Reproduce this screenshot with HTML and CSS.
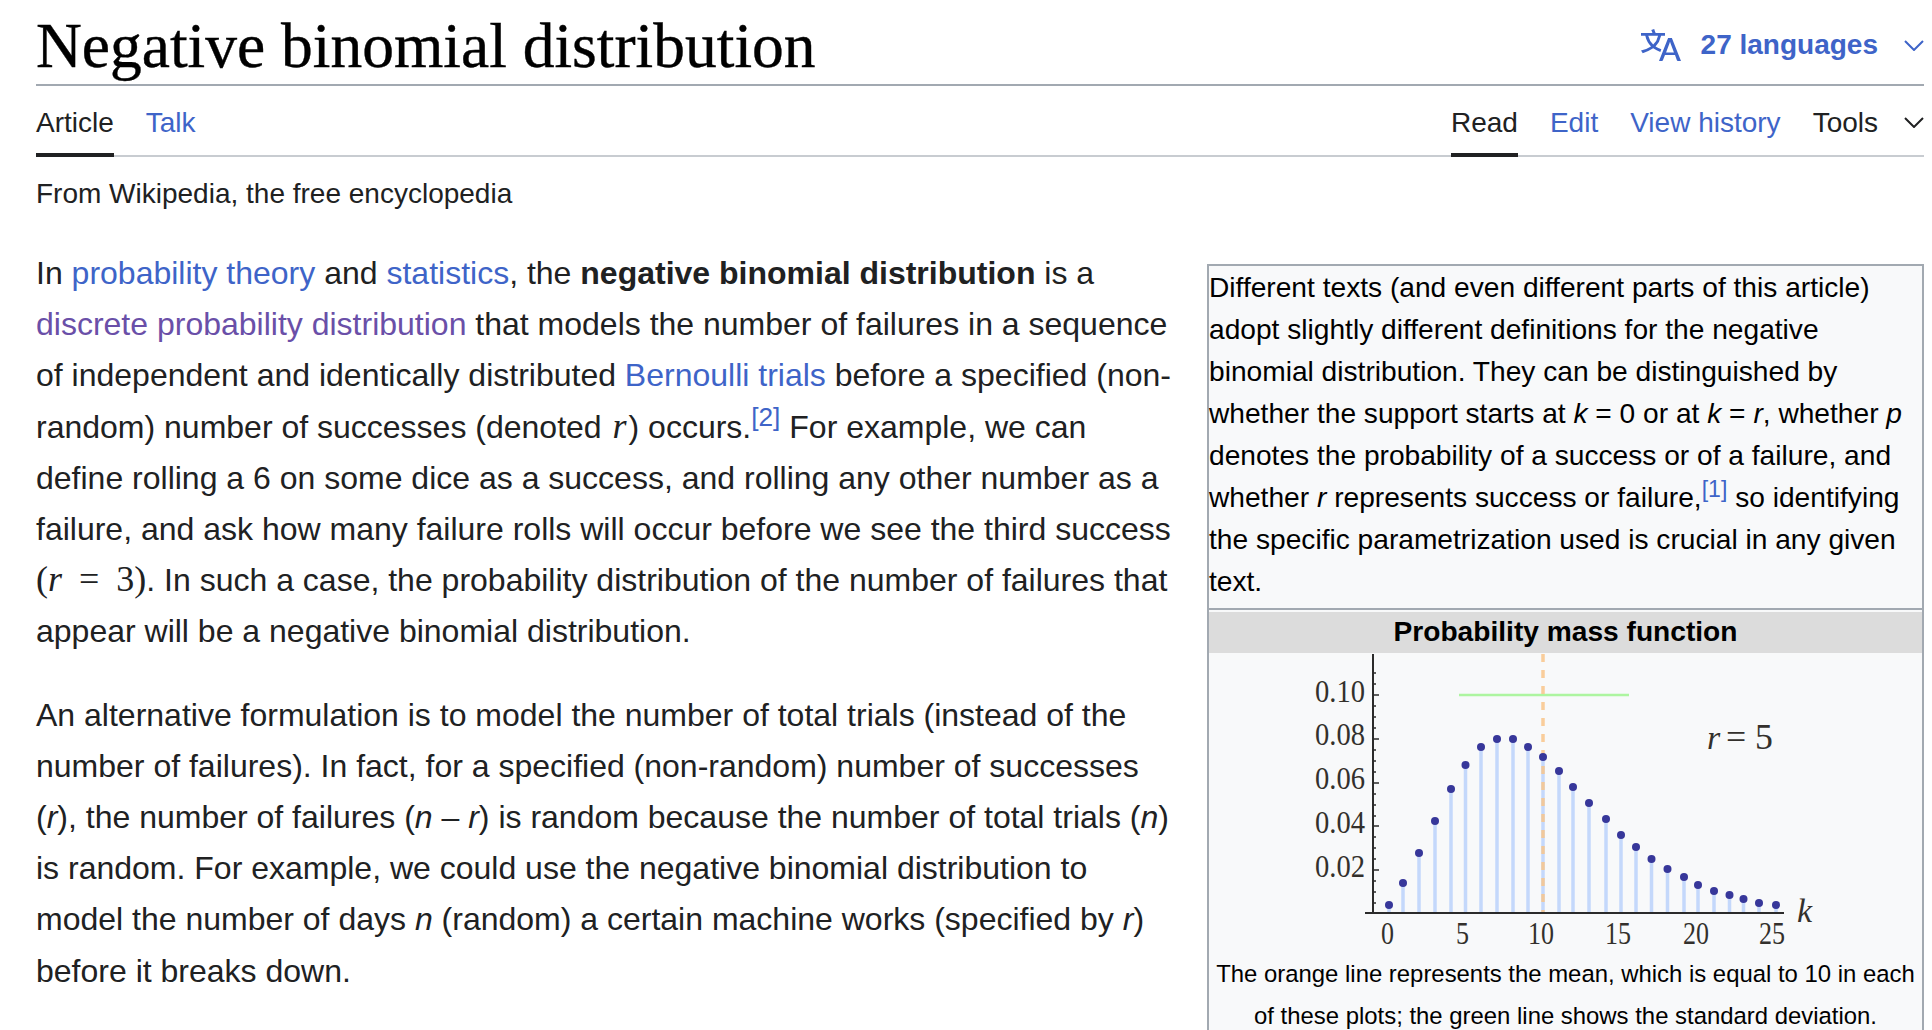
FILE: index.html
```html
<!DOCTYPE html>
<html lang="en">
<head>
  <meta charset="UTF-8">
  <title>Negative binomial distribution - Wikipedia</title>
  <link rel="stylesheet" href="styles.css">
</head>
<body>
  <header class="title-bar">
    <h1>Negative binomial distribution</h1>
    <a class="lang-btn" href="#">
      <svg class="lang-icon" viewBox="0 0 20 20"><path d="M20 18h-1.44a.6.6 0 0 1-.4-.12.8.8 0 0 1-.23-.31L17 15h-5l-1 2.54a.8.8 0 0 1-.22.3.6.6 0 0 1-.4.14H9l4.55-11.47h1.89zm-3.53-4.31L14.89 9.5a12 12 0 0 1-.39-1.24q-.09.37-.19.69l-.19.56-1.58 4.19zm-6.3-1.58a13.4 13.4 0 0 1-2.91-1.41 11.46 11.46 0 0 0 2.81-5.37H12V4H7.31a4 4 0 0 0-.2-.56C6.87 2.79 6.6 2 6.6 2l-1.47.5s.4.89.6 1.5H0v1.33h2.15A11.23 11.23 0 0 0 5 10.7a17.2 17.2 0 0 1-5 2.1q.56.82.87 1.38a23.3 23.3 0 0 0 5.22-2.51 15.6 15.6 0 0 0 3.56 1.77zM3.63 5.33h4.91a8.1 8.1 0 0 1-2.45 4.45 9.1 9.1 0 0 1-2.46-4.45"/></svg>
      <span>27 languages</span>
      <svg class="chevron" viewBox="0 0 20 11"><path d="M1 1l9 9 9-9"/></svg>
    </a>
  </header>

  <nav class="tabs">
    <div class="tab-group">
      <a class="tab active" href="#">Article</a>
      <a class="tab" href="#">Talk</a>
    </div>
    <div class="tab-group">
      <a class="tab active" href="#">Read</a>
      <a class="tab" href="#">Edit</a>
      <a class="tab" href="#">View history</a>
      <a class="tab tools" href="#">Tools
        <svg class="chevron" viewBox="0 0 20 11"><path d="M1 1l9 9 9-9"/></svg>
      </a>
    </div>
  </nav>

  <div class="site-sub">From Wikipedia, the free encyclopedia</div>

  <main class="content">
    <article class="article">
      <p>In <a href="#">probability theory</a> and <a href="#">statistics</a>, the <b>negative binomial distribution</b> is a <a class="visited" href="#">discrete probability distribution</a> that models the number of failures in a sequence of independent and identically distributed <a href="#">Bernoulli trials</a> before a specified (non-random) number of successes (denoted <span class="math">r</span>) occurs.<sup><a href="#">[2]</a></sup> For example, we can define rolling a 6 on some dice as a success, and rolling any other number as a failure, and ask how many failure rolls will occur before we see the third success <span class="math-group">(<i>r</i> = 3)</span>. In such a case, the probability distribution of the number of failures that appear will be a negative binomial distribution.</p>
      <p>An alternative formulation is to model the number of total trials (instead of the number of failures). In fact, for a specified (non-random) number of successes (<i>r</i>), the number of failures (<i>n</i> &ndash; <i>r</i>) is random because the number of total trials (<i>n</i>) is random. For example, we could use the negative binomial distribution to model the number of days <i>n</i> (random) a certain machine works (specified by <i>r</i>) before it breaks down.</p>
    </article>

    <aside class="infobox">
      <div class="infobox-note">Different texts (and even different parts of this article) adopt slightly different definitions for the negative binomial distribution. They can be distinguished by whether the support starts at <i>k</i> = 0 or at <i>k</i> = <i>r</i>, whether <i>p</i> denotes the probability of a success or of a failure, and whether <i>r</i> represents success or failure,<sup><a href="#">[1]</a></sup> so identifying the specific parametrization used is crucial in any given text.</div>
      <div class="infobox-head">Probability mass function</div>
      <svg class="pmf-chart" viewBox="0 0 510 301">
        <g class="stems">
          <path d="M78 259V251M92 259V229M108 259V199M124 259V167M140 259V135M154.500 259V111M170 259V93M186 259V85M202 259V85M217 259V93M232 259V103M248 259V117M262 259V133M278 259V149M295 259V165M310 259V181M325 259V193M340.500 259V205M356.500 259V215M373 259V223M387 259V231M403 259V237M418.500 259V241M432.500 259V245M448 259V249M465 259V251"/>
        </g>
        <path class="sd-line" d="M148 41H318"/>
        <path class="mean-line" d="M232 0V259"/>
        <g class="dots">
          <circle cx="78" cy="251" r="4"/><circle cx="92" cy="229" r="4"/><circle cx="108" cy="199" r="4"/><circle cx="124" cy="167" r="4"/><circle cx="140" cy="135" r="4"/><circle cx="154.500" cy="111" r="4"/><circle cx="170" cy="93" r="4"/><circle cx="186" cy="85" r="4"/><circle cx="202" cy="85" r="4"/><circle cx="217" cy="93" r="4"/><circle cx="232" cy="103" r="4"/><circle cx="248" cy="117" r="4"/><circle cx="262" cy="133" r="4"/><circle cx="278" cy="149" r="4"/><circle cx="295" cy="165" r="4"/><circle cx="310" cy="181" r="4"/><circle cx="325" cy="193" r="4"/><circle cx="340.500" cy="205" r="4"/><circle cx="356.500" cy="215" r="4"/><circle cx="373" cy="223" r="4"/><circle cx="387" cy="231" r="4"/><circle cx="403" cy="237" r="4"/><circle cx="418.500" cy="241" r="4"/><circle cx="432.500" cy="245" r="4"/><circle cx="448" cy="249" r="4"/><circle cx="465" cy="251" r="4"/>
        </g>
        <path class="axis" d="M54 259H473M62 0V259"/>
        <path class="ticks" d="M62 41h6M62 85h6M62 129h6M62 172h6M62 216h6M62 19h3M62 30h3M62 52h3M62 63h3M62 74h3M62 96h3M62 107h3M62 118h3M62 140h3M62 151h3M62 162h3M62 183h3M62 194h3M62 205h3M62 227h3M62 238h3M62 249h3"/>
        <g class="y-labels">
          <text x="4" y="48" textLength="50" lengthAdjust="spacingAndGlyphs">0.10</text>
          <text x="4" y="91" textLength="50" lengthAdjust="spacingAndGlyphs">0.08</text>
          <text x="4" y="135" textLength="50" lengthAdjust="spacingAndGlyphs">0.06</text>
          <text x="4" y="179" textLength="50" lengthAdjust="spacingAndGlyphs">0.04</text>
          <text x="4" y="223" textLength="50" lengthAdjust="spacingAndGlyphs">0.02</text>
        </g>
        <g class="x-labels">
          <text x="70" y="290" textLength="13" lengthAdjust="spacingAndGlyphs">0</text>
          <text x="145" y="290" textLength="13" lengthAdjust="spacingAndGlyphs">5</text>
          <text x="217" y="290" textLength="26" lengthAdjust="spacingAndGlyphs">10</text>
          <text x="294" y="290" textLength="26" lengthAdjust="spacingAndGlyphs">15</text>
          <text x="372" y="290" textLength="26" lengthAdjust="spacingAndGlyphs">20</text>
          <text x="448" y="290" textLength="26" lengthAdjust="spacingAndGlyphs">25</text>
        </g>
        <text class="var" x="396" y="95">r</text>
        <text class="plain" x="415" y="95" textLength="47" lengthAdjust="spacingAndGlyphs">= 5</text>
        <text class="var" x="486" y="268">k</text>
      </svg>
      <div class="infobox-caption">The orange line represents the mean, which is equal to 10 in each of these plots; the green line shows the standard deviation.</div>
    </aside>
  </main>
</body>
</html>
```

FILE: styles.css
```css
html, body {
  height: 100%;
  overflow: hidden;
}

body {
  margin: 0;
  padding: 0 8px 0 36px;
  font-family: "Liberation Sans", Arial, sans-serif;
  color: #202122;
  background: #fff;
}

a {
  color: #3e64c8;
  text-decoration: none;
}

a.visited {
  color: #6a4fa8;
}

/* Title row */
.title-bar {
  display: flex;
  justify-content: space-between;
  align-items: center;
  height: 84px;
  border-bottom: 2px solid #a2a9b1;
}

h1 {
  margin: 0;
  padding-top: 8px;
  font-family: "Liberation Serif", serif;
  font-size: 63.5px;
  font-weight: normal;
  color: #000;
  -webkit-text-stroke: 0.4px #000;
}

.lang-btn {
  display: flex;
  align-items: center;
  font-size: 28px;
  font-weight: bold;
  padding-top: 6px;
}

.lang-icon {
  width: 40px;
  height: 40px;
  fill: #3e64c8;
  margin-right: 20px;
}

.chevron {
  width: 20px;
  height: 11px;
  margin-left: 26px;
  fill: none;
  stroke: currentColor;
  stroke-width: 2;
}

/* Tabs */
.tabs {
  display: flex;
  justify-content: space-between;
  height: 69px;
  border-bottom: 2px solid #c8ccd1;
}

.tab-group {
  display: flex;
  gap: 32px;
}

.tab {
  display: flex;
  align-items: center;
  height: 71px;
  padding-top: 6px;
  box-sizing: border-box;
  border-bottom: 4px solid transparent;
  font-size: 28px;
}

.tab.active {
  color: #202122;
  border-bottom-color: #202122;
}

.tab.tools {
  color: #202122;
}

/* Tagline */
.site-sub {
  margin-top: 20px;
  font-size: 28px;
  line-height: 34px;
}

/* Article and infobox */
.content {
  display: flex;
  gap: 30px;
  align-items: flex-start;
  margin-top: 16px;
}

.article {
  flex: 1;
  min-width: 0;
  font-size: 32px;
  line-height: 51.2px;
}

.article p {
  margin: 0 0 32px;
  padding-top: 21px;
}

.article p + p {
  padding-top: 0;
}

sup {
  font-size: 0.82em;
  line-height: 0;
}

.math {
  margin: 0 2px;
  font-family: "Liberation Serif", serif;
  font-style: italic;
  font-size: 36px;
  line-height: 0;
}

.math-group {
  font-family: "Liberation Serif", serif;
  font-size: 36px;
  line-height: 0;
  word-spacing: 8px;
}

.infobox {
  flex: none;
  width: 713px;
  margin-top: 37px;
  border: 2px solid #a2a9b1;
  background: #f8f9fa;
  color: #000;
  font-size: 28.15px;
  line-height: 42px;
}

.infobox-note {
  padding: 1px 0 5px;
  border-bottom: 2px solid #a2a9b1;
}

.infobox-head {
  margin-top: 2px;
  padding-bottom: 2px;
  background: #dcdcdc;
  font-weight: bold;
  line-height: 39px;
  text-align: center;
}

.pmf-chart {
  display: block;
  width: 510px;
  height: 301px;
  margin: 1px auto 0;
}

.stems path {
  fill: none;
  stroke: #c4d8fb;
  stroke-width: 3.5;
}

.sd-line {
  fill: none;
  stroke: #adf5a0;
  stroke-width: 2.5;
}

.mean-line {
  fill: none;
  stroke: #f9c58a;
  stroke-width: 3.5;
  stroke-dasharray: 8 8;
  opacity: 0.85;
}

.dots circle {
  fill: #37379a;
}

.axis, .ticks {
  fill: none;
  stroke: #2b2b2b;
  stroke-width: 2;
}

.ticks {
  stroke-width: 1.5;
}

.y-labels, .x-labels, .var, .plain {
  font-family: "Liberation Serif", serif;
  font-size: 31px;
  fill: #33302c;
}

.var {
  font-style: italic;
  font-size: 34px;
}

.plain {
  font-size: 35px;
}

.infobox-caption {
  margin-top: -2px;
  padding: 0 4px 30px;
  font-size: 23.9px;
  text-align: center;
}
```
